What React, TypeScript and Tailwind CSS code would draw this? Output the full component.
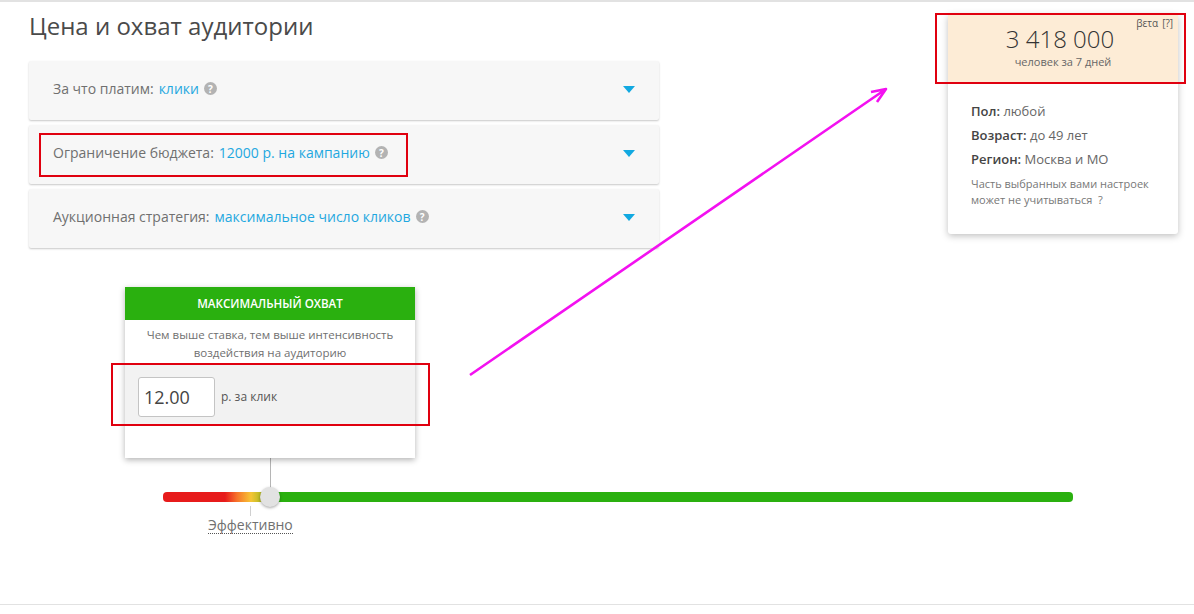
const OPEN = "font-['Open_Sans',sans-serif]";

const HelpDot = () => (
    <span className="ml-[5px] inline-flex h-[13px] w-[13px] shrink-0 items-center justify-center rounded-full bg-[#b3b3b3] text-[10px] font-bold leading-none text-white">
        ?
    </span>
);

const Caret = () => (
    <span className="mt-[1px] h-0 w-0 border-x-[6px] border-t-[7px] border-x-transparent border-t-[#12a9e1]" />
);

const OptionRow = ({ label, value }: { label: string; value: string }) => (
    <div className="flex h-[59px] items-center justify-between rounded-[2px] bg-[#f7f7f7] pb-[4px] pl-[24px] pr-[24px] shadow-[0_1px_2px_rgba(0,0,0,0.22)]">
        <div className="flex items-center text-[14px]">
            <span className="text-[#707070]">{label}</span>
            <span className="ml-[5px] text-[#1fa8e0]">{value}</span>
            <HelpDot />
        </div>
        <Caret />
    </div>
);

const AudienceCard = () => (
    <aside className="mt-[12px] h-[220px] w-[230px] rounded-[3px] bg-white shadow-[0_2px_7px_rgba(0,0,0,0.25)]">
        <div className="relative flex h-[68px] flex-col items-center bg-[#fdecd6] pt-[7px]">
            <span className="absolute right-[5px] top-[2px] flex gap-[4px] text-[10px] text-[#555]">
                <span>βετα</span>
                <span>[?]</span>
            </span>
            <div className="pr-[6px] text-[24px] font-light leading-[36px] text-[#333]">3 418 000</div>
            <div className="mt-[-2px] text-[11px] leading-[14px] text-[#666]">человек за 7 дней</div>
        </div>
        <div className="px-[23px] pt-[17px] text-[13px] leading-[24px] text-[#666]">
            <div><b className="font-semibold text-[#444]">Пол:</b> любой</div>
            <div><b className="font-semibold text-[#444]">Возраст:</b> до 49 лет</div>
            <div><b className="font-semibold text-[#444]">Регион:</b> Москва и МО</div>
            <div className="mt-[5px] text-[11px] leading-[16px] text-[#777]">
                Часть выбранных вами настроек
                <br />
                может не учитываться&nbsp; ?
            </div>
        </div>
    </aside>
);

const BidWidget = () => (
    <div className="ml-[96px] mt-[39px] h-[171px] w-[290px] bg-white shadow-[0_2px_6px_rgba(0,0,0,0.3)]">
        <div className="flex h-[33px] items-center justify-center bg-[#2ab00f] text-[11.6px] font-semibold uppercase text-white">
            Максимальный охват
        </div>
        <p className="pt-[6px] text-center text-[11.5px] leading-[18px] text-[#707070]">
            Чем выше ставка, тем выше интенсивность
            <br />
            воздействия на аудиторию
        </p>
        <div className="mt-[3px] flex h-[61px] items-center gap-[6px] bg-[#f2f2f2] pl-[13px] pt-[2px]">
            <div className="flex h-[40px] w-[77px] items-center rounded-[3px] border border-[#c4c4c4] bg-white pl-[5px] pt-[1px] text-[18px] text-[#444]">
                12.00
            </div>
            <span className="text-[12px] text-[#555]">р. за клик</span>
        </div>
    </div>
);

const Slider = () => (
    <div className="relative ml-[163px] h-[10px] w-[910px] rounded-[4px] bg-[linear-gradient(90deg,#e71b1b_0px,#e71b1b_62px,#f7732a_74px,#f6c535_88px,#a8b81f_100px,#2ab00f_108px,#2ab00f_100%)]">
        <span className="absolute left-[97px] top-[-5px] h-[20px] w-[20px] rounded-full bg-[#e2e2e2] shadow-[0_1px_3px_rgba(0,0,0,0.35)]" />
    </div>
);

export default function App() {
    return (
        <div className={`${OPEN} flex h-[614px] w-full flex-col overflow-hidden border-t-2 border-[#e2e2e2] bg-white`}>
            <div className="relative flex-1">
                <div className="flex justify-between pr-[16px]">
                    <div className="w-[659px] pl-[29px]">
                        <h1 className="h-[59px] pt-[6px] text-[24px] font-normal leading-[36px] text-[#4a4a4a]">
                            Цена и охват аудитории
                        </h1>
                        <div className="flex flex-col gap-[5px]">
                            <OptionRow label="За что платим:" value="клики" />
                            <OptionRow label="Ограничение бюджета:" value="12000 р. на кампанию" />
                            <OptionRow label="Аукционная стратегия:" value="максимальное число кликов" />
                        </div>
                        <BidWidget />
                    </div>
                    <AudienceCard />
                </div>
                <div className="ml-[270px] h-[34px] w-px bg-[#b5b5b5]" />
                <Slider />
                <div className="ml-[250px] mt-[4px] h-[10px] w-px bg-[#d0d0d0]" />
                <div className="ml-[208px] w-fit border-b border-dotted border-[#555] text-[14px] leading-[17px] text-[#707070]">
                    Эффективно
                </div>

                {/* annotations drawn on top of the screenshot */}
                <div className="absolute left-[39px] top-[131px] h-[44px] w-[369px] border-2 border-[#e0000f]" />
                <div className="absolute left-[935px] top-[11px] h-[71px] w-[251px] border-2 border-[#e0000f]" />
                <div className="absolute left-[111px] top-[361px] h-[63px] w-[319px] border-2 border-[#e0000f]" />
                <svg className="absolute left-0 top-[-2px]" width="1194" height="614" fill="none">
                    <path d="M470 375L886 89M871 92L886 89L877 102" stroke="#f311f0" strokeWidth="2.6" strokeLinejoin="round" />
                </svg>
            </div>
            <div className="mb-[9px] h-px w-full bg-[#e2e2e2]" />
        </div>
    );
}
